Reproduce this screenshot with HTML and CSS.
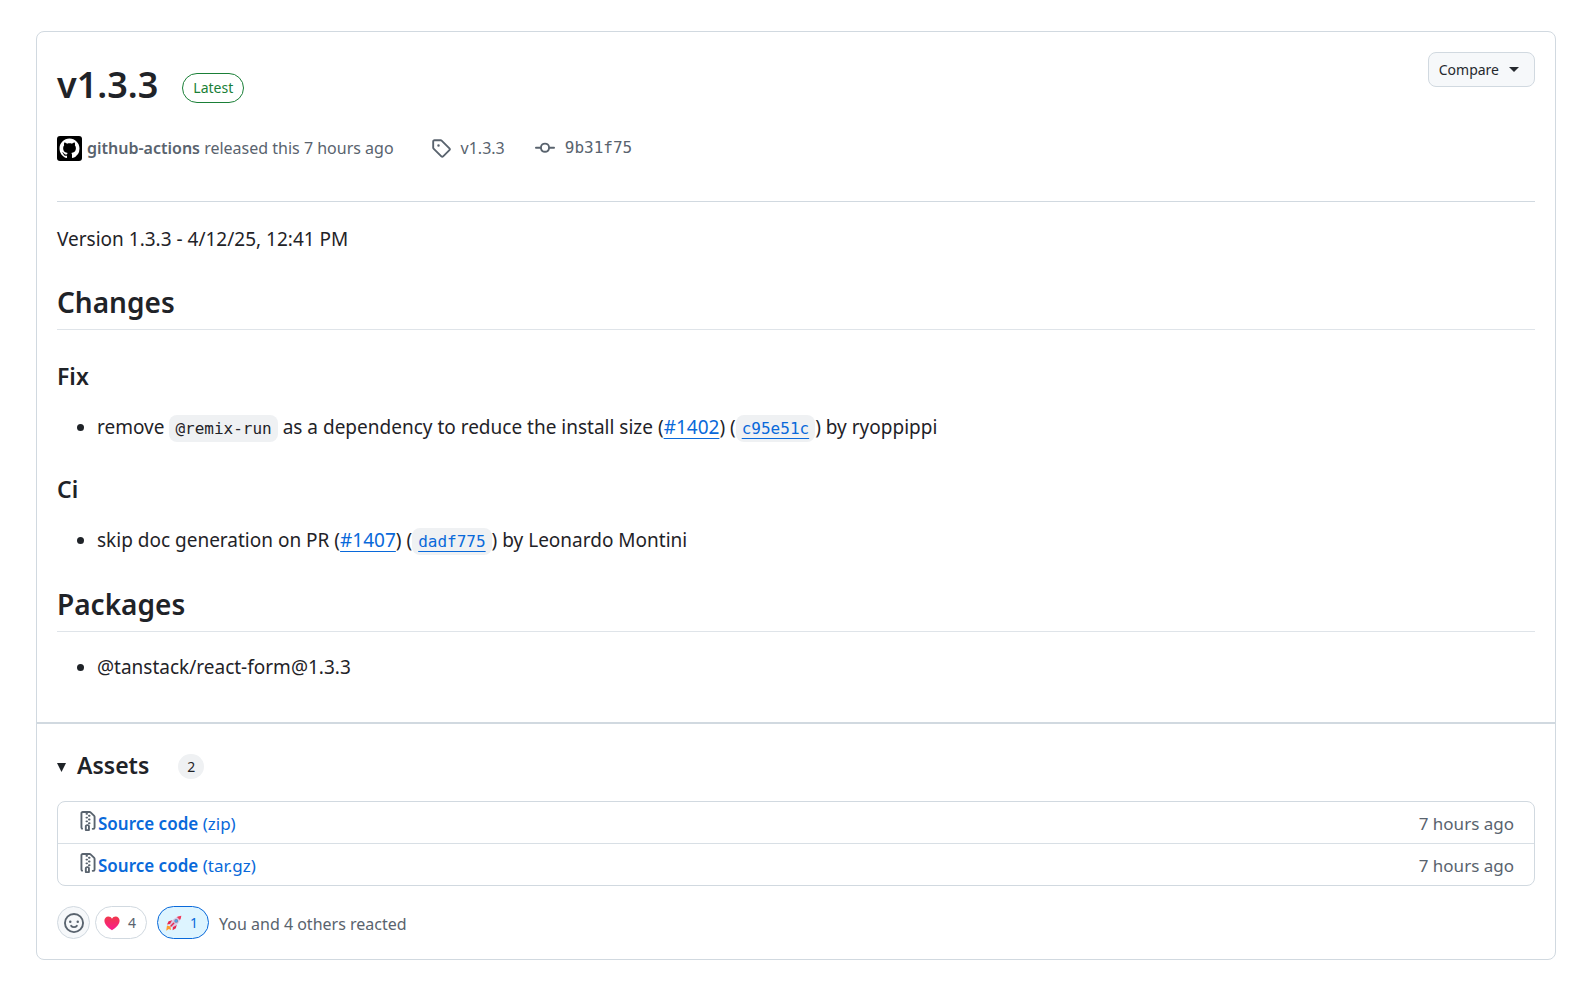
FILE: index.html
```html
<!DOCTYPE html>
<html lang="en">
<head>
  <meta charset="UTF-8">
  <meta name="viewport" content="width=device-width, initial-scale=1">
  <title>Release v1.3.3</title>
  <link rel="stylesheet" href="styles.css">
</head>
<body>

  <main class="release">
    <div class="release-body">
      <header class="release-header">
        <div class="title-row">
          <h1>v1.3.3</h1>
          <span class="label-latest">Latest</span>
        </div>
        <button class="btn-compare" type="button">Compare <span class="caret"></span></button>
      </header>

      <div class="meta">
        <div class="meta-author">
          <svg class="avatar" viewBox="0 0 25 25" aria-hidden="true">
            <rect width="25" height="25" rx="3" fill="#000"/>
            <path transform="translate(2.5 2.5) scale(1.25)" fill="#fff" d="M8 0C3.58 0 0 3.58 0 8c0 3.54 2.29 6.53 5.47 7.59.4.07.55-.17.55-.38 0-.19-.01-.82-.01-1.49-2.01.37-2.53-.49-2.69-.94-.09-.23-.48-.94-.82-1.13-.28-.15-.68-.52-.01-.53.63-.01 1.08.58 1.23.82.72 1.21 1.87.87 2.33.66.07-.52.28-.87.51-1.07-1.78-.2-3.64-.89-3.64-3.95 0-.87.31-1.59.82-2.15-.08-.2-.36-1.02.08-2.12 0 0 .67-.21 2.2.82.64-.18 1.32-.27 2-.27s1.36.09 2 .27c1.53-1.04 2.2-.82 2.2-.82.44 1.1.16 1.92.08 2.12.51.56.82 1.27.82 2.15 0 3.07-1.87 3.75-3.65 3.95.29.25.54.73.54 1.48 0 1.07-.01 1.93-.01 2.2 0 .21.15.46.55.38A8.01 8.01 0 0 0 16 8c0-4.42-3.58-8-8-8Z"/>
          </svg>
          <p><a href="#author">github-actions</a> released this 7 hours ago</p>
        </div>
        <a class="meta-link" href="#tag">
          <svg class="icon" viewBox="0 0 16 16" aria-hidden="true"><path d="M1 7.775V2.75C1 1.784 1.784 1 2.75 1h5.025c.464 0 .91.184 1.238.513l6.25 6.25a1.75 1.75 0 0 1 0 2.474l-5.026 5.026a1.75 1.75 0 0 1-2.474 0l-6.25-6.25A1.752 1.752 0 0 1 1 7.775Zm1.5 0c0 .066.026.13.073.177l6.25 6.25a.25.25 0 0 0 .354 0l5.025-5.025a.25.25 0 0 0 0-.354l-6.25-6.25a.25.25 0 0 0-.177-.073H2.75a.25.25 0 0 0-.25.25ZM6 5a1 1 0 1 1 0 2 1 1 0 0 1 0-2Z"/></svg>
          <span>v1.3.3</span>
        </a>
        <a class="meta-link" href="#commit">
          <svg class="icon" viewBox="0 0 16 16" aria-hidden="true"><path d="M11.93 8.5a4.002 4.002 0 0 1-7.86 0H.75a.75.75 0 0 1 0-1.5h3.32a4.002 4.002 0 0 1 7.86 0h3.32a.75.75 0 0 1 0 1.5Zm-1.43-.75a2.5 2.5 0 1 0-5 0 2.5 2.5 0 0 0 5 0Z"/></svg>
          <code>9b31f75</code>
        </a>
      </div>

      <div class="markdown">
        <p>Version 1.3.3 - 4/12/25, 12:41 PM</p>
        <h2>Changes</h2>
        <h3>Fix</h3>
        <ul>
          <li>remove <code>@remix-run</code> as a dependency to reduce the install size (<a href="#1402">#1402</a>) (<code><a href="#c95e51c">c95e51c</a></code>) by ryoppippi</li>
        </ul>
        <h3>Ci</h3>
        <ul>
          <li>skip doc generation on PR (<a href="#1407">#1407</a>) (<code><a href="#dadf775">dadf775</a></code>) by Leonardo Montini</li>
        </ul>
        <h2>Packages</h2>
        <ul>
          <li>@tanstack/react-form@1.3.3</li>
        </ul>
      </div>
    </div>

    <div class="release-footer">
      <details open>
        <summary><h3>Assets</h3><span class="counter">2</span></summary>
        <ul class="assets">
          <li>
            <svg class="icon" viewBox="0 0 16 16" aria-hidden="true"><path d="M3.5 1.75v11.5c0 .09.048.173.126.217a.75.75 0 0 1-.752 1.298A1.748 1.748 0 0 1 2 13.25V1.75C2 .784 2.784 0 3.75 0h5.586c.464 0 .909.185 1.237.513l2.914 2.914c.329.328.513.773.513 1.237v8.586A1.75 1.75 0 0 1 12.25 15h-.5a.75.75 0 0 1 0-1.5h.5a.25.25 0 0 0 .25-.25V4.664a.25.25 0 0 0-.073-.177L9.513 1.573a.25.25 0 0 0-.177-.073H7.25a.75.75 0 0 1 0 1.5h-.5a.75.75 0 0 1 0-1.5h-3a.25.25 0 0 0-.25.25Zm3.75 8.75h.5c.966 0 1.75.784 1.75 1.75v3a.75.75 0 0 1-.75.75h-2.5a.75.75 0 0 1-.75-.75v-3c0-.966.784-1.75 1.75-1.75ZM6 5.25a.75.75 0 0 1 .75-.75h.5a.75.75 0 0 1 0 1.5h-.5A.75.75 0 0 1 6 5.25Zm.75 2.25h.5a.75.75 0 0 1 0 1.5h-.5a.75.75 0 0 1 0-1.5ZM8 6.75A.75.75 0 0 1 8.75 6h.5a.75.75 0 0 1 0 1.5h-.5A.75.75 0 0 1 8 6.75ZM8.75 3h.5a.75.75 0 0 1 0 1.5h-.5a.75.75 0 0 1 0-1.5ZM8 9.75A.75.75 0 0 1 8.75 9h.5a.75.75 0 0 1 0 1.5h-.5A.75.75 0 0 1 8 9.75Zm-1 2.5v2.25h1v-2.25a.25.25 0 0 0-.25-.25h-.5a.25.25 0 0 0-.25.25Z"/></svg>
            <a href="#zip"><b>Source code</b> (zip)</a>
            <span class="asset-time">7 hours ago</span>
          </li>
          <li>
            <svg class="icon" viewBox="0 0 16 16" aria-hidden="true"><path d="M3.5 1.75v11.5c0 .09.048.173.126.217a.75.75 0 0 1-.752 1.298A1.748 1.748 0 0 1 2 13.25V1.75C2 .784 2.784 0 3.75 0h5.586c.464 0 .909.185 1.237.513l2.914 2.914c.329.328.513.773.513 1.237v8.586A1.75 1.75 0 0 1 12.25 15h-.5a.75.75 0 0 1 0-1.5h.5a.25.25 0 0 0 .25-.25V4.664a.25.25 0 0 0-.073-.177L9.513 1.573a.25.25 0 0 0-.177-.073H7.25a.75.75 0 0 1 0 1.5h-.5a.75.75 0 0 1 0-1.5h-3a.25.25 0 0 0-.25.25Zm3.75 8.75h.5c.966 0 1.75.784 1.75 1.75v3a.75.75 0 0 1-.75.75h-2.5a.75.75 0 0 1-.75-.75v-3c0-.966.784-1.75 1.75-1.75ZM6 5.25a.75.75 0 0 1 .75-.75h.5a.75.75 0 0 1 0 1.5h-.5A.75.75 0 0 1 6 5.25Zm.75 2.25h.5a.75.75 0 0 1 0 1.5h-.5a.75.75 0 0 1 0-1.5ZM8 6.75A.75.75 0 0 1 8.75 6h.5a.75.75 0 0 1 0 1.5h-.5A.75.75 0 0 1 8 6.75ZM8.75 3h.5a.75.75 0 0 1 0 1.5h-.5a.75.75 0 0 1 0-1.5ZM8 9.75A.75.75 0 0 1 8.75 9h.5a.75.75 0 0 1 0 1.5h-.5A.75.75 0 0 1 8 9.75Zm-1 2.5v2.25h1v-2.25a.25.25 0 0 0-.25-.25h-.5a.25.25 0 0 0-.25.25Z"/></svg>
            <a href="#targz"><b>Source code</b> (tar.gz)</a>
            <span class="asset-time">7 hours ago</span>
          </li>
        </ul>
      </details>

      <div class="reactions">
        <button class="react-add" type="button" aria-label="Add a reaction">
          <svg class="icon" viewBox="0 0 16 16" aria-hidden="true">
            <circle cx="8" cy="8" r="7.25" fill="none" stroke="currentColor" stroke-width="1.5"/>
            <circle cx="5" cy="7" r="1"/>
            <circle cx="11" cy="7" r="1"/>
            <path d="M5.75 10.25C6.3 10.95 7.1 11.25 8 11.25s1.7-.3 2.25-1" fill="none" stroke="currentColor" stroke-width="1.5" stroke-linecap="round"/>
          </svg>
        </button>
        <button class="reaction" type="button">
          <svg class="emoji" viewBox="0 0 16 16" aria-hidden="true">
            <defs>
              <linearGradient id="heart" x1="0" y1="0" x2="0" y2="1">
                <stop offset="0" stop-color="#f0384a"/>
                <stop offset="1" stop-color="#fb1c8f"/>
              </linearGradient>
            </defs>
            <path fill="url(#heart)" d="M8 15.2C5.6 13.500.4 10.100.4 5.700.4 3.200 2.200 1.500 4.300 1.500 5.900 1.500 7.200 2.300 8 3.700 8.800 2.300 10.100 1.500 11.700 1.500 13.800 1.500 15.600 3.200 15.600 5.700 15.600 10.100 10.400 13.500 8 15.2Z"/>
          </svg>
          <span>4</span>
        </button>
        <button class="reaction reaction-mine" type="button">
          <svg class="emoji" viewBox="0 0 16 16" aria-hidden="true">
            <path fill="#ff9b2e" d="M1 10.500 4.500 11.500 5 15 2.800 13.900.2 15.800Z"/>
            <path fill="#e8274f" d="M6.300 5.300 2.600 6.200 1 9.500 4.600 9.100ZM10.700 9.700 9.900 13.200 6.600 15.300 6.900 11.400Z"/>
            <path fill="#d9c7e3" d="M3.600 10.200C5 6 8.500 1.800 15.300.7 14.500 7 10.300 11 5.900 12.500Z"/>
            <path fill="#f2385a" d="M10.900 2.100C12.200 1.300 13.700.8 15.300.7 15.200 2.300 14.800 3.700 14 5.100Z"/>
            <path stroke="#e8274f" stroke-width="1.500" stroke-linecap="round" d="M7.700 8.300 5 11"/>
            <circle cx="10.200" cy="5.900" r="1.900" fill="#7085b0"/>
            <circle cx="10.200" cy="5.900" r="1.100" fill="#48a8ee"/>
          </svg>
          <span>1</span>
        </button>
        <p>You and 4 others reacted</p>
      </div>
    </div>
  </main>

</body>
</html>
```
FILE: styles.css
```css
* {
  box-sizing: border-box;
}
body {
  margin: 0;
  padding: 31px 35px 28px 36px;
  background: #fff;
  color: #1f2328;
  font-family: "Noto Sans", "Open Sans", sans-serif;
  font-size: 19px;
  line-height: 30px;
}
h1, h2, h3, p, ul {
  margin: 0;
}
h1, h2, h3, b {
  font-weight: 600;
}
a {
  color: #0969da;
}
code {
  font-family: "DejaVu Sans Mono", monospace;
  font-size: 16px;
}
button {
  font-family: inherit;
  cursor: pointer;
}
.release {
  border: 1px solid #d1d9e0;
  border-radius: 8px;
}
.release-body {
  padding: 20px 20px 39px;
}
.icon {
  width: 20px;
  height: 20px;
  flex: none;
  fill: currentColor;
}

/* header */
.release-header {
  display: flex;
  justify-content: space-between;
  align-items: flex-start;
}
.title-row {
  display: flex;
  align-items: center;
  gap: 24px;
  padding-top: 8px;
}
h1 {
  font-size: 36px;
  line-height: 50px;
}
.label-latest {
  margin-top: 6px;
  padding: 0 10px;
  border: 1px solid #1a7f37;
  border-radius: 15px;
  color: #1a7f37;
  font-size: 14px;
  line-height: 28px;
}
.btn-compare {
  display: flex;
  align-items: center;
  gap: 10px;
  height: 35px;
  padding: 0 15px 0 10px;
  border: 1px solid #d1d9e0;
  border-radius: 8px;
  background: #f6f8fa;
  color: #25292e;
  font-size: 14px;
}
.caret {
  border: 5px solid transparent;
  border-top-color: currentColor;
  border-bottom: 0;
}

/* author, tag and commit */
.meta {
  display: flex;
  align-items: center;
  gap: 30px;
  padding: 23px 0 38px;
  border-bottom: 1px solid #d1d9e0;
  color: #59636e;
  font-size: 16px;
}
.meta-author {
  display: flex;
  align-items: center;
  gap: 5px;
  margin-right: 7px;
}
.meta-author a {
  color: inherit;
  font-weight: 600;
  text-decoration: none;
}
.avatar {
  width: 25px;
  height: 25px;
}
.meta-link {
  display: flex;
  align-items: center;
  gap: 10px;
  color: inherit;
  text-decoration: none;
}

/* release notes */
.markdown {
  padding-top: 22px;
}
.markdown h2 {
  margin: 30px 0 20px;
  padding-bottom: 9px;
  border-bottom: 1px solid #dfe4e9;
  font-size: 28px;
  line-height: 36px;
}
.markdown h3 {
  margin: 30px 0 20px;
}
.markdown ul {
  padding-left: 40px;
}
.markdown li {
  line-height: 31px;
}
.markdown li a {
  text-underline-offset: 4px;
  text-decoration-thickness: 1px;
}
.markdown li code {
  padding: 4px 6px;
  border-radius: 8px;
  background: #eff1f3;
  line-height: 20px;
}
h3 {
  font-size: 23px;
  line-height: 32px;
}

/* assets */
.release-footer {
  padding: 20px;
  border-top: 2px solid #d1d9e0;
}
summary {
  display: flex;
  align-items: center;
  height: 42px;
  cursor: pointer;
}
summary::before {
  content: "";
  width: 9px;
  height: 9px;
  margin: 5px 11px 0 0;
  background: currentColor;
  clip-path: polygon(0 0, 100% 0, 50% 100%);
}
.counter {
  min-width: 26px;
  margin: 2px 0 0 29px;
  border-radius: 13px;
  background: #eff1f3;
  font-size: 14px;
  line-height: 25px;
  text-align: center;
}
.assets {
  margin-top: 15px;
  padding: 0;
  border: 1px solid #d1d9e0;
  border-radius: 8px;
  list-style: none;
  font-size: 17px;
}
.assets li {
  display: flex;
  align-items: center;
  height: 41px;
  padding: 2px 20px 0;
}
.assets li + li {
  height: 42px;
  border-top: 1px solid #d8dfe5;
}
.assets .icon {
  margin-bottom: 5px;
  color: #59636e;
}
.assets a {
  text-decoration: none;
}
.asset-time {
  margin-left: auto;
  color: #59636e;
}

/* reactions */
.reactions {
  display: flex;
  align-items: center;
  margin-top: 20px;
  color: #59636e;
  font-size: 16px;
}
.reactions p {
  padding-top: 3px;
}
.react-add,
.reaction {
  display: flex;
  align-items: center;
  justify-content: center;
  height: 33px;
  padding: 0 10px 0 8px;
  border: 1px solid #d1d9e0;
  border-radius: 17px;
  background: #fff;
  color: #59636e;
  font-size: 14px;
}
.react-add {
  width: 33px;
  margin-right: 5px;
  padding: 0;
  background: #f6f8fa;
}
.reaction {
  gap: 8px;
  margin-right: 10px;
}
.reaction-mine {
  border-color: #0969da;
  background: #ddf4ff;
  color: #0969da;
}
.emoji {
  width: 16px;
  height: 16px;
}
```
